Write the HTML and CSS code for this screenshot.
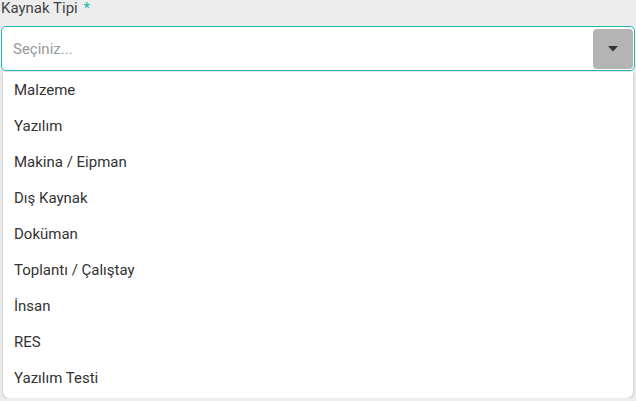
FILE: index.html
```html
<!DOCTYPE html>
<html lang="tr">
<head>
<meta charset="utf-8">
<link rel="stylesheet" href="styles.css">
</head>
<body>
<div class="field">
  <div class="label">Kaynak Tipi <span class="req">*</span></div>
  <div class="select">
    <span class="placeholder">Seçiniz...</span>
    <span class="btn"><svg width="10" height="6" viewBox="0 0 10 6"><path d="M0 0h10L5 5.5z" fill="#333"/></svg></span>
  </div>
  <ul class="menu">
    <li>Malzeme</li>
    <li>Yazılım</li>
    <li>Makina / Eipman</li>
    <li>Dış Kaynak</li>
    <li>Doküman</li>
    <li>Toplantı / Çalıştay</li>
    <li>İnsan</li>
    <li>RES</li>
    <li>Yazılım Testi</li>
  </ul>
</div>
</body>
</html>
```
FILE: styles.css
```css
html, body {
  margin: 0;
  padding: 0;
  background: #ededed;
  font-family: Roboto, "Liberation Sans", sans-serif;
  overflow: hidden;
}
.field {
  padding: 0 1px 0 1px;
}
.label {
  font-size: 15px;
  line-height: 18px;
  height: 27px;
  color: #444;
  margin-top: -1px;
}
.req {
  color: #20b5ad;
  margin-left: 2px;
}
.select {
  height: 43px;
  border: 1px solid #22b8b0;
  border-radius: 5px;
  background: #fff;
  display: flex;
  align-items: center;
  justify-content: space-between;
  padding: 0 1px 0 11px;
  width: 620px;
}
.placeholder {
  font-size: 15px;
  color: #9a9a9a;
}
.btn {
  width: 40px;
  height: 40px;
  background: #b4b4b4;
  border-radius: 4px;
  display: flex;
  align-items: center;
  justify-content: center;
}
.menu {
  list-style: none;
  margin: 1px 2px 0 2px;
  padding: 0 0 2px 0;
  background: #fff;
  border-radius: 0 0 6px 6px;
  box-shadow: 0 1px 3px rgba(0,0,0,0.25);
  width: 630px;
}
.menu li {
  height: 36px;
  line-height: 36px;
  padding-left: 11px;
  font-size: 15px;
  color: #333;
}
```
